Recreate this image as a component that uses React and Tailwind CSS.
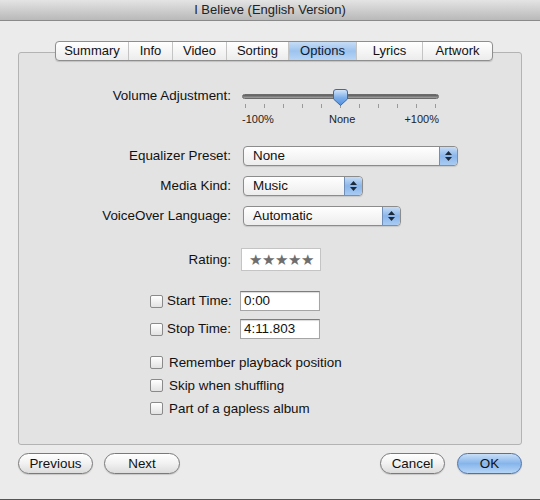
import React from "react";

const font = { fontFamily: '"Lucida Grande", "Liberation Sans", Arial, sans-serif' };

const tabs = [
  { name: "Summary", w: "w-[72px]" },
  { name: "Info", w: "w-[44px]" },
  { name: "Video", w: "w-[54px]" },
  { name: "Sorting", w: "w-[62px]" },
  { name: "Options", w: "w-[68px]", active: true },
  { name: "Lyrics", w: "w-[66px]" },
  { name: "Artwork", w: "w-[70px]" },
];

function Stepper() {
  return (
    <div className="h-full w-[18px] border-l border-[#6f8fb8] bg-gradient-to-b from-[#c7dcf5] via-[#8ab6ea] to-[#a9cbf2] rounded-r-[4px] flex flex-col items-center justify-center gap-[2px]">
      <svg width="7" height="4" viewBox="0 0 7 4"><path d="M3.5 0 L7 4 H0 Z" fill="#1d2a3a" /></svg>
      <svg width="7" height="4" viewBox="0 0 7 4"><path d="M0 0 H7 L3.5 4 Z" fill="#1d2a3a" /></svg>
    </div>
  );
}

function Popup({ value, w }) {
  return (
    <div className={`${w} h-[20px] flex items-center rounded-[4px] border border-[#8c8c8c] bg-gradient-to-b from-white to-[#ededed] shadow-[0_1px_1px_rgba(0,0,0,0.12)]`}>
      <span className="flex-1 pl-[9px] text-[13.4px] text-[#111]">{value}</span>
      <Stepper />
    </div>
  );
}

function Check() {
  return (
    <div className="w-[13px] h-[13px] rounded-[2px] border border-[#8a8a8a] bg-gradient-to-b from-white to-[#e2e2e2] shrink-0" />
  );
}

function Field({ value }) {
  return (
    <div className="w-[80px] h-[20px] border border-[#a5a5a5] border-t-[#7d7d7d] bg-white shadow-[inset_0_1px_1px_rgba(0,0,0,0.15)] pl-[3px] text-[13.4px] leading-[18px] text-[#111]">
      {value}
    </div>
  );
}

function Button({ children, w, primary }) {
  return (
    <button
      className={`${w} h-[21px] rounded-full border text-[13.4px] leading-[19px] text-[#111] shadow-[0_1px_1px_rgba(0,0,0,0.15)] ${
        primary
          ? "border-[#4f73a3] bg-gradient-to-b from-[#c9def7] via-[#86b5eb] to-[#b6d5f6]"
          : "border-[#7a7a7a] bg-gradient-to-b from-white via-[#f1f1f1] to-[#dcdcdc]"
      }`}
    >
      {children}
    </button>
  );
}

export default function App() {
  return (
    <div style={font} className="w-[540px] h-[500px] bg-[#ebebeb] flex flex-col border-b border-[#555] overflow-hidden text-[#111]">
      {/* Title bar */}
      <div className="h-[21px] shrink-0 bg-gradient-to-b from-[#e4e4e4] to-[#b9b9b9] border-b border-[#8a8a8a] flex items-center justify-center text-[13px] text-[#222]">
        I Believe (English Version)
      </div>

      {/* Tabs */}
      <div className="relative z-10 mt-[20px] pl-[55px] flex">
        <div className="flex h-[20px] rounded-[4px] border border-[#8e8e8e] bg-gradient-to-b from-white to-[#ececec] overflow-hidden shadow-[0_1px_1px_rgba(0,0,0,0.15)]">
          {tabs.map((t, i) => (
            <div
              key={t.name}
              className={`${t.w} flex items-center justify-center text-[13px] ${
                i > 0 ? "border-l border-[#c4c4c4]" : ""
              } ${t.active ? "bg-gradient-to-b from-[#c6dcf5] via-[#9dc3ee] to-[#b8d5f5] text-[#0c1a33]" : ""}`}
            >
              {t.name}
            </div>
          ))}
        </div>
      </div>

      {/* Panel */}
      <div className="mx-[18px] -mt-[9px] h-[393px] border border-[#b3b3b3] rounded-[3px] bg-[#e3e3e3] pt-[33px] text-[13.4px]">
        {/* Volume */}
        <div className="flex items-start">
          <div className="w-[212px] text-right leading-[20px]">Volume Adjustment:</div>
          <div className="ml-[11px] w-[197px]">
            <div className="relative h-[20px] flex items-center">
              <div className="w-full h-[5px] rounded-full bg-gradient-to-b from-[#5c5c5c] to-[#a4a4a4] border border-[#6b6b6b]" />
              <svg className="absolute left-[90px] top-[2px]" width="17" height="19" viewBox="0 0 17 19">
                <defs>
                  <linearGradient id="kn" x1="0" y1="0" x2="0" y2="1">
                    <stop offset="0" stopColor="#d7e7fa" />
                    <stop offset="0.5" stopColor="#7fb0ea" />
                    <stop offset="1" stopColor="#4d8ee0" />
                  </linearGradient>
                </defs>
                <path d="M1.5 4 Q1.5 1.5 4 1.5 H13 Q15.5 1.5 15.5 4 V11 L8.5 17.5 L1.5 11 Z" fill="url(#kn)" stroke="#46679a" strokeWidth="1" />
              </svg>
            </div>
            <div className="-mt-[2px] h-[4px] flex justify-between px-[3px]">
              {Array.from({ length: 11 }).map((_, i) => (
                <div key={i} className="w-px h-full bg-[#9a9a9a]" />
              ))}
            </div>
            <div className="mt-[4px] flex justify-between text-[11px] leading-[14px] text-[#222]">
              <span>-100%</span>
              <span className="ml-[6px]">None</span>
              <span>+100%</span>
            </div>
          </div>
        </div>

        {/* Popups */}
        <div className="mt-[20px] flex flex-col gap-[10px]">
          <div className="flex items-center">
            <div className="w-[212px] text-right">Equalizer Preset:</div>
            <div className="ml-[12px]"><Popup value="None" w="w-[215px]" /></div>
          </div>
          <div className="flex items-center">
            <div className="w-[212px] text-right">Media Kind:</div>
            <div className="ml-[12px]"><Popup value="Music" w="w-[120px]" /></div>
          </div>
          <div className="flex items-center">
            <div className="w-[212px] text-right">VoiceOver Language:</div>
            <div className="ml-[12px]"><Popup value="Automatic" w="w-[158px]" /></div>
          </div>
        </div>

        {/* Rating */}
        <div className="mt-[22px] flex items-center">
          <div className="w-[212px] text-right">Rating:</div>
          <div className="ml-[10px] w-[80px] h-[23px] bg-white border border-[#c4c4c4] flex items-center justify-center text-[15px] leading-none text-[#6e6e6e]">
            ★★★★★
          </div>
        </div>

        {/* Times */}
        <div className="mt-[20px] flex flex-col gap-[8px]">
          {[
            ["Start Time:", "0:00"],
            ["Stop Time:", "4:11.803"],
          ].map(([l, v]) => (
            <div key={l} className="flex items-center pl-[131px]">
              <div className="w-[90px] flex items-center gap-[4px]">
                <Check />
                <span>{l}</span>
              </div>
              <Field value={v} />
            </div>
          ))}
        </div>

        {/* Options checkboxes */}
        <div className="mt-[14px] pl-[131px] flex flex-col gap-[5px]">
          {["Remember playback position", "Skip when shuffling", "Part of a gapless album"].map((l) => (
            <div key={l} className="h-[18px] flex items-center gap-[6px]">
              <Check />
              <span>{l}</span>
            </div>
          ))}
        </div>
      </div>

      {/* Buttons */}
      <div className="mt-[6px] px-[18px] flex items-center">
        <Button w="w-[75px]">Previous</Button>
        <div className="ml-[11px]"><Button w="w-[76px]">Next</Button></div>
        <div className="flex-1" />
        <Button w="w-[65px]">Cancel</Button>
        <div className="ml-[12px]"><Button w="w-[65px]" primary>OK</Button></div>
      </div>
    </div>
  );
}
